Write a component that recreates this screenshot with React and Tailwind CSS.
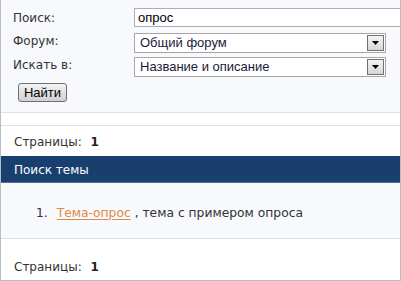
import React from 'react';

function SelectBox({ value }) {
  return (
    <div className="relative shrink-0 w-[252px] h-[20px] bg-white border border-[#a5a5a5] font-['Liberation_Sans',Arial,sans-serif] text-[13px] leading-[18px] text-[#1a1a3a] pl-[5px]">
      {value}
      <div className="absolute right-[1px] top-[1px] w-[17px] h-[16px] border border-[#707070] bg-gradient-to-b from-[#f4f4f4] to-[#d6d6d6] flex items-center justify-center">
        <svg width="7" height="4" viewBox="0 0 7 4">
          <path d="M0 0h7L3.5 4z" fill="#000" />
        </svg>
      </div>
    </div>
  );
}

export default function App() {
  return (
    <div className="w-[401px] h-[281px] bg-white border-x border-b border-[#bcbcbc] overflow-hidden font-['DejaVu_Sans',Verdana,sans-serif] text-[12px] text-[#333]">
      <div className="h-[113px] bg-[#f7f9fc] border-b border-[#dce2ea] pt-[8px] pl-[12px]">
        <div className="flex items-start h-[25px]">
          <div className="shrink-0 w-[121px] pt-[3px] leading-[14px]">Поиск:</div>
          <div className="shrink-0 w-[280px] h-[19px] bg-white border border-[#a9adb4] font-['Liberation_Sans',Arial,sans-serif] text-[13px] leading-[17px] text-black pl-[3px]">
            опрос
          </div>
        </div>
        <div className="flex items-start h-[24px]">
          <div className="shrink-0 w-[121px] pt-[1px] leading-[14px]">Форум:</div>
          <SelectBox value="Общий форум" />
        </div>
        <div className="flex items-start h-[26px]">
          <div className="shrink-0 w-[121px] pt-[1px] leading-[14px]">Искать в:</div>
          <SelectBox value="Название и описание" />
        </div>
        <button className="ml-[5px] w-[49px] h-[19px] rounded-[3px] border border-[#707070] bg-gradient-to-b from-[#f3f3f3] to-[#d0d0d0] font-['Liberation_Sans',Arial,sans-serif] text-[13px] leading-[15px] text-black">
          Найти
        </button>
      </div>
      <div className="h-[13px] border-b border-[#dce2ea]" />
      <div className="h-[30px] pl-[13px] pt-[9px] leading-[14px]">
        Страницы: <b className="ml-[5px] text-[#222]">1</b>
      </div>
      <div className="h-[27px] bg-[#183f6d] border-b border-[#4d6f98] text-white pl-[13px] pt-[7px] leading-[14px]">
        Поиск темы
      </div>
      <div className="h-[56px] bg-[#f7f9fc] border-b border-[#d8dfe8] pl-[35px] pt-[23px] leading-[14px] text-[12.3px]">
        <span className="text-[#3a2a4a]">1.</span>
        <span className="ml-[9px] text-[#e08a45] underline underline-offset-2">Тема-опрос</span>
        <span> , тема с примером опроса</span>
      </div>
      <div className="h-[41px] pl-[13px] pt-[21px] leading-[14px]">
        Страницы: <b className="ml-[5px] text-[#222]">1</b>
      </div>
    </div>
  );
}
